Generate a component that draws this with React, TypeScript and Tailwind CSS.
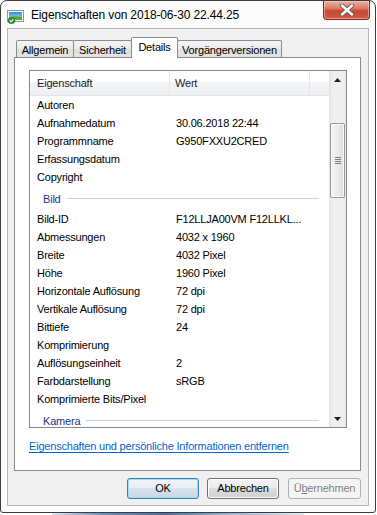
import React from 'react';

type Row = { name: string; value?: string };

const general: Row[] = [
  { name: 'Autoren' },
  { name: 'Aufnahmedatum', value: '30.06.2018 22:44' },
  { name: 'Programmname', value: 'G950FXXU2CRED' },
  { name: 'Erfassungsdatum' },
  { name: 'Copyright' },
];

const bild: Row[] = [
  { name: 'Bild-ID', value: 'F12LLJA00VM F12LLKL...' },
  { name: 'Abmessungen', value: '4032 x 1960' },
  { name: 'Breite', value: '4032 Pixel' },
  { name: 'Höhe', value: '1960 Pixel' },
  { name: 'Horizontale Auflösung', value: '72 dpi' },
  { name: 'Vertikale Auflösung', value: '72 dpi' },
  { name: 'Bittiefe', value: '24' },
  { name: 'Komprimierung' },
  { name: 'Auflösungseinheit', value: '2' },
  { name: 'Farbdarstellung', value: 'sRGB' },
  { name: 'Komprimierte Bits/Pixel' },
];

export default function App() {
  return (
    <div className="w-[377px] h-[515px] bg-white overflow-hidden font-['Liberation_Sans',Arial,sans-serif] text-[11px] tracking-[-0.2px] text-black">
      <div className="w-[376px] h-[513px] border border-[#3c3c3c] rounded-t-[7px] rounded-b-[3px] bg-[#fcfcfc] flex flex-col">
        {/* title bar */}
        <div className="h-[27px] flex shrink-0">
          <div className="ml-[6px] mt-[8px]">
            <PictureIcon />
          </div>
          <span className="ml-[7px] mt-[7px] text-[12px] tracking-[-0.15px] leading-[15px] text-black">Eigenschaften von 2018-06-30 22.44.25</span>
          <div className="flex-1" />
          <CloseButton />
        </div>

        {/* client */}
        <div className="mx-[6px] h-[478px] border border-[#b4b4b4] bg-[#f0f0f0] flex flex-col pt-[8px]">
          <div className="ml-[6px] mr-[7px] flex flex-col">
            <div className="h-[20px] pl-[2px] flex items-end">
              <Tab label="Allgemein" w="w-[58px]" />
              <Tab label="Sicherheit" w="w-[59px]" />
              <Tab label="Details" w="w-[47px]" active />
              <Tab label="Vorgängerversionen" w="w-[105px]" />
            </div>
            <div className="h-[414px] border border-[#898c95] bg-white pl-[14px] pt-[12px] flex flex-col">
              <ListView />
              <a className="mt-[11px] leading-[14px] text-[#0066cc] underline underline-offset-[2px] cursor-pointer">
                Eigenschaften und persönliche Informationen entfernen
              </a>
            </div>
          </div>

          <div className="mt-[7px] flex">
            <button className="ml-[119px] w-[72px] h-[21px] rounded-[3px] border border-[#3c7fb1] bg-[linear-gradient(#f0f6fa,#e6eef4_50%,#d6e2ec_50%,#c9d8e5)] shadow-[inset_0_0_0_1px_#a8dcf5] leading-[19px] text-black">
              OK
            </button>
            <button className="ml-[8px] w-[72px] h-[21px] rounded-[3px] border border-[#707070] bg-[linear-gradient(#f2f2f2,#ebebeb_50%,#dddddd_50%,#cfcfcf)] shadow-[inset_0_0_0_1px_#fcfcfc] leading-[19px] text-black">
              Abbrechen
            </button>
            <button className="ml-[9px] w-[73px] h-[21px] rounded-[3px] border border-[#adb2b5] bg-[#f4f4f4] leading-[19px] text-[#838383]">
              Ü<span className="underline">b</span>ernehmen
            </button>
          </div>
        </div>
      </div>
      <div className="ml-[52px] w-[252px] h-[2px] bg-[linear-gradient(90deg,#dfe6ef,#6f8db5_20%,#4f6e98_45%,#9db2cd_70%,#e6ebf1)]" />
    </div>
  );
}

function Tab({ label, w, active }: { label: string; w: string; active?: boolean }) {
  if (active) {
    return (
      <div className={`${w} -ml-px h-[21px] -mb-px relative z-10 border border-b-0 border-[#898c95] rounded-t-[2px] bg-white flex justify-center pt-[2px] leading-[14px]`}>
        {label}
      </div>
    );
  }
  return (
    <div className={`${w} -ml-px first:ml-0 h-[17px] border border-b-0 border-[#898c95] rounded-t-[2px] bg-[linear-gradient(#f4f4f4,#ebebeb_50%,#dedede_50%,#e4e4e4)] flex justify-center pt-[2px] leading-[14px]`}>
      {label}
    </div>
  );
}

function ListView() {
  return (
    <div className="w-[318px] h-[358px] border border-[#828790] flex overflow-hidden">
      <div className="flex-1 flex flex-col overflow-hidden">
        <div className="h-[25px] shrink-0 flex border-b border-[#e2e3e6] bg-[linear-gradient(#ffffff,#ffffff_45%,#f3f4f6_46%,#eff0f2)] text-[#1d1d1d]">
          <div className="w-[140px] pl-[7px] flex items-center border-r border-[#e3e7ec]">Eigenschaft</div>
          <div className="w-[140px] pl-[5px] flex items-center border-r border-[#e3e7ec]">Wert</div>
          <div className="flex-1" />
        </div>
        <div className="flex flex-col">
          {general.map((r) => (
            <ItemRow key={r.name} row={r} />
          ))}
          <Group label="Bild" />
          {bild.map((r) => (
            <ItemRow key={r.name} row={r} />
          ))}
          <Group label="Kamera" />
        </div>
      </div>
      <ScrollBar />
    </div>
  );
}

function ItemRow({ row }: { row: Row }) {
  return (
    <div className="h-[18px] shrink-0 flex items-center leading-[14px]">
      <div className="w-[146px] pl-[7px] whitespace-nowrap">{row.name}</div>
      <div className="whitespace-nowrap">{row.value}</div>
    </div>
  );
}

function Group({ label }: { label: string }) {
  return (
    <div className="h-[24px] shrink-0 flex items-center gap-[6px] pl-[13px] pr-[10px] pt-px">
      <span className="text-[#1e3287] leading-[14px]">{label}</span>
      <div className="flex-1 h-px bg-[#c5d2ea]" />
    </div>
  );
}

function ScrollBar() {
  return (
    <div className="w-[17px] flex flex-col bg-[linear-gradient(90deg,#e3e3e3,#efefef_20%,#f0f0f0_80%,#e8e8e8)]">
      <div className="h-[17px] flex items-center justify-center">
        <svg width="7" height="4" viewBox="0 0 7 4">
          <path d="M3.5 0 L7 4 L0 4 Z" fill="#202020" />
        </svg>
      </div>
      <div className="flex-1 flex flex-col">
        <div className="mt-[35px] mx-px h-[75px] rounded-[2px] border border-[#979797] bg-[linear-gradient(90deg,#f4f4f4,#ececec_50%,#dcdcdc)] shadow-[inset_0_0_0_1px_#fafafa] flex flex-col items-center justify-center gap-px">
          <div className="w-[6px] h-px bg-[#7d7d7d]" />
          <div className="w-[6px] h-px bg-[#7d7d7d]" />
          <div className="w-[6px] h-px bg-[#7d7d7d]" />
          <div className="w-[6px] h-px bg-[#7d7d7d]" />
        </div>
      </div>
      <div className="h-[17px] flex items-center justify-center">
        <svg width="7" height="4" viewBox="0 0 7 4">
          <path d="M0 0 L7 0 L3.5 4 Z" fill="#202020" />
        </svg>
      </div>
    </div>
  );
}

function CloseButton() {
  return (
    <div className="mr-[5px] w-[47px] h-[19px] rounded-b-[4px] border border-t-0 border-[#7d2b21] bg-[linear-gradient(#eab0a3,#dd7c68_40%,#c9462f_55%,#cf5a40)] shadow-[inset_0_0_0_1px_rgba(255,220,210,0.5)] flex items-center justify-center">
      <svg width="16" height="12" viewBox="0 0 16 12">
        <path d="M3 1.5 L13 10.5 M13 1.5 L3 10.5" stroke="#5a5a5a" strokeWidth="4.2" strokeLinecap="round" />
        <path d="M3 1.5 L13 10.5 M13 1.5 L3 10.5" stroke="#ffffff" strokeWidth="2.4" strokeLinecap="round" />
      </svg>
    </div>
  );
}

function PictureIcon() {
  return (
    <svg width="17" height="15" viewBox="0 0 17 15">
      <defs>
        <linearGradient id="sky" x1="0" y1="0" x2="0" y2="1">
          <stop offset="0" stopColor="#2f8fd8" />
          <stop offset="1" stopColor="#b8e3f8" />
        </linearGradient>
      </defs>
      <rect x="0.5" y="1.5" width="16" height="11" fill="#f7f7f7" stroke="#8a9aa8" />
      <rect x="2" y="3" width="13" height="8" fill="url(#sky)" />
      <path d="M2 11 L2 8.5 Q7 6.5 15 8 L15 11 Z" fill="#5da23b" />
      <circle cx="4.5" cy="11.5" r="3.3" fill="#2d9a2b" stroke="#1b6f1a" strokeWidth="0.6" />
      <path d="M2.9 11.5 L4.2 12.8 L6.3 10.2" stroke="#fff" strokeWidth="1.1" fill="none" />
    </svg>
  );
}
